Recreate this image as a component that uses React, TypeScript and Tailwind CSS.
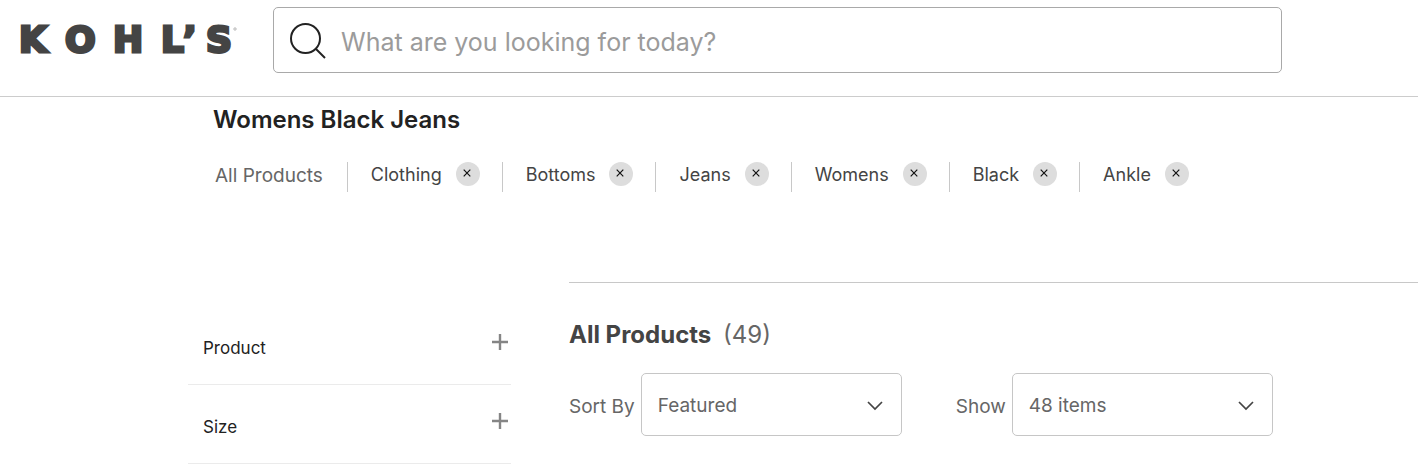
import { useState } from "react";

const initialFilters = ["Clothing", "Bottoms", "Jeans", "Womens", "Black", "Ankle"];
const facets = ["Product", "Size"];

function Logo() {
  return (
    <svg width="220" height="44" viewBox="0 0 220 44" role="img" aria-label="Kohl's" className="block">
      <g
        fill="#444444"
        stroke="#444444"
        strokeWidth="3"
        fontFamily="'DejaVu Sans', sans-serif"
        fontWeight="700"
        fontSize="36"
      >
        <text x="-1 45 93 141 163 186" y="34">KOHL’S</text>
      </g>
      <circle cx="215" cy="11" r="1.2" fill="none" stroke="#999999" strokeWidth="0.7" />
    </svg>
  );
}

function FilterChip({ label, onRemove }: { label: string; onRemove: () => void }) {
  return (
    <li className="flex h-[30px] items-start border-l border-[#c8c8c8] pl-[23px] pr-[22px]">
      <span className="leading-[26px]">{label}</span>
      <button
        type="button"
        aria-label={`Remove ${label}`}
        onClick={onRemove}
        className="ml-[14px] flex size-6 justify-center rounded-full bg-[#dddddd] pr-[2px] pt-[7px] text-[#111111]"
      >
        <svg width="8" height="8" viewBox="0 0 8 8" stroke="currentColor" strokeWidth="1.2">
          <path d="M0.7 0.7 7.3 7.3M7.3 0.7 0.7 7.3" />
        </svg>
      </button>
    </li>
  );
}

function SelectField({ id, label, options }: { id: string; label: string; options: string[] }) {
  return (
    <div className="flex items-center gap-[6px]">
      <label htmlFor={id} className="pt-[6px]">{label}</label>
      <div className="relative">
        <select
          id={id}
          className="h-[63px] w-[261px] appearance-none rounded-[5px] border border-[#c6c6c6] bg-white pl-4 pr-12 pt-1 text-[#666666]"
        >
          {options.map((option) => (
            <option key={option}>{option}</option>
          ))}
        </select>
        <svg
          width="16"
          height="10"
          viewBox="0 0 16 10"
          fill="none"
          stroke="#444444"
          strokeWidth="1.7"
          className="pointer-events-none absolute right-[19px] top-7"
        >
          <path d="M1 1 8 8 15 1" />
        </svg>
      </div>
    </div>
  );
}

export default function App() {
  const [filters, setFilters] = useState(initialFilters);

  return (
    <div className="bg-white font-['Inter','Liberation_Sans',sans-serif] text-[#444444]">
      <header className="flex items-start border-b border-[#cccccc] pb-[23px] pl-5 pr-[136px] pt-[7px]">
        <a href="#" className="mr-[33px] mt-[11px] shrink-0">
          <Logo />
        </a>
        <form
          role="search"
          className="flex h-[66px] flex-1 items-center rounded-[5px] border border-[#a9a9a9] pl-4"
        >
          <svg width="37" height="37" viewBox="0 0 37 37" fill="none" stroke="#222222" strokeWidth="2">
            <circle cx="15.5" cy="16.5" r="14.5" />
            <path d="M25.5 26.5 35 36" />
          </svg>
          <input
            type="search"
            aria-label="Search"
            placeholder="What are you looking for today?"
            className="ml-[14px] h-full min-w-0 flex-1 bg-transparent pt-1 text-[25px] outline-none placeholder:text-[#9b9b9b]"
          />
        </form>
      </header>

      <main>
        <div className="pl-[213px]">
          <h1 className="pt-[7px] text-[24px] font-semibold leading-8 text-[#222222]">Womens Black Jeans</h1>
          <div className="mt-[26px] flex items-start text-[18px]">
            <a href="#" className="pl-[2px] pr-6 text-[19px] leading-[28px] text-[#666666]">
              All Products
            </a>
            <ul className="flex">
              {filters.map((filter) => (
                <FilterChip
                  key={filter}
                  label={filter}
                  onRemove={() => setFilters(filters.filter((item) => item !== filter))}
                />
              ))}
            </ul>
          </div>
        </div>

        <div className="mt-[90px] flex items-start pl-[188px]">
          <aside className="mr-[58px] w-[323px] shrink-0 pt-6">
            {facets.map((facet) => (
              <button
                key={facet}
                type="button"
                className="flex h-[79px] w-full items-start justify-between border-b border-[#ebebeb] pl-[15px] pr-[3px] pt-7 text-[17px] text-[#222222]"
              >
                <span className="pt-[2px] leading-6">{facet}</span>
                <svg width="16" height="16" viewBox="0 0 16 16" stroke="#858585" strokeWidth="2.4">
                  <path d="M8 0V16M0 8H16" />
                </svg>
              </button>
            ))}
          </aside>

          <section className="flex-1 border-t border-[#c8c8c8] pt-9">
            <h2 className="text-[24px] font-bold leading-8">
              All Products <span className="ml-[6px] font-normal text-[#666666]">(49)</span>
            </h2>
            <div className="mt-[22px] flex gap-[54px] text-[19px] text-[#666666]">
              <SelectField id="sort" label="Sort By" options={["Featured", "New Arrivals", "Price Low-High"]} />
              <SelectField id="show" label="Show" options={["48 items", "96 items", "120 items"]} />
            </div>
          </section>
        </div>
      </main>
    </div>
  );
}
